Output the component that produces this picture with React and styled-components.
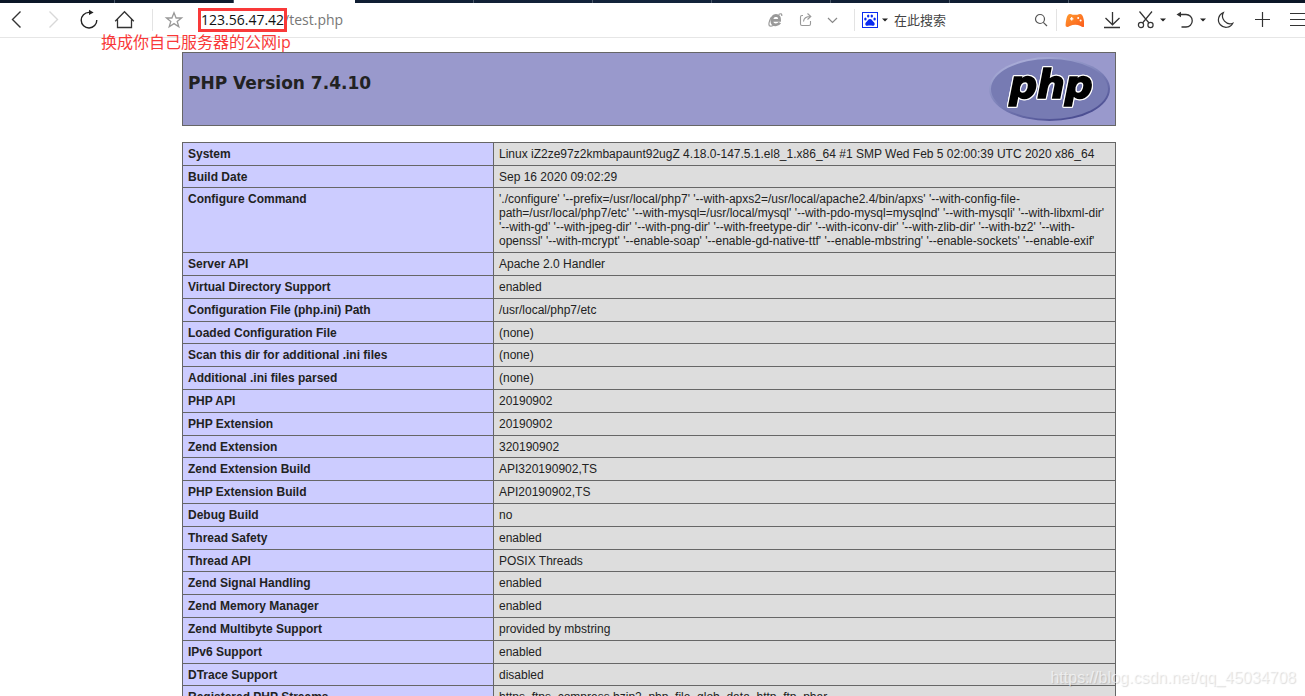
import React from 'react'
import styled, { createGlobalStyle } from 'styled-components'

const GlobalStyle = createGlobalStyle`
*{
  box-sizing: border-box;
}
body{
  margin: 0;
  background: #fff;
  color: #222;
  font-family: "Liberation Sans", Arial, "Noto Sans CJK SC", sans-serif;
}
`

const Browser = styled.div`
position: relative;
display: flex;
flex-direction: column;
height: 100vh;
overflow: hidden;
`

const TabStrip = styled.div`
display: flex;
flex: none;
height: 3px;
overflow: hidden;
background: linear-gradient(90deg, #0b1626, #13243c 50%, #0b1626);
`

const Tab = styled.span`
flex: none;
width: ${(props) => (props.$active ? '121px' : '119px')};
background: ${(props) => (props.$active ? '#fff' : 'transparent')};
border-right: 1px solid ${(props) => (props.$active ? '#fff' : '#4a5869')};
&:first-child{
  margin-left: -4px;
}
`

const Toolbar = styled.header`
display: flex;
flex: none;
align-items: center;
height: 35px;
border-bottom: 1px solid #e6e6e6;
overflow: hidden;
`

const NavGroup = styled.nav`
display: flex;
gap: 12px;
padding: 0 16px 0 4px;
`

const IconButton = styled.button`
display: flex;
flex: none;
align-items: center;
justify-content: center;
gap: 4px;
height: 24px;
padding: 0;
border: none;
background: none;
color: ${(props) => props.$color || '#333'};
svg{
  flex: none;
  fill: none;
  stroke: currentColor;
}
`

const Divider = styled.span`
flex: none;
width: 1px;
height: 22px;
background: #e3e3e3;
`

const Address = styled.form`
display: flex;
flex: 1;
align-items: center;
gap: 15px;
min-width: 0;
padding-left: 9px;
`

const AddressText = styled.div`
display: flex;
flex: 1;
min-width: 0;
font: 14px/20px "Open Sans", "Noto Sans", sans-serif;
`

const Host = styled.label`
position: relative;
color: #111;
`

const Mark = styled.span`
position: absolute;
top: -2px;
right: -3px;
bottom: -2px;
left: -3px;
border: 3px solid #f93939;
`

const PathInput = styled.input`
flex: 1;
min-width: 0;
padding: 0;
border: none;
outline: none;
background: none;
color: #777;
font: inherit;
`

const PageActions = styled.div`
display: flex;
gap: 4px;
padding-right: 10px;
`

const SearchBox = styled.form`
display: flex;
flex: none;
align-items: center;
width: 201px;
padding: 0 8px 0 7px;
`

const SearchInput = styled.input`
flex: 1;
min-width: 0;
padding: 0 0 0 6px;
border: none;
outline: none;
background: none;
font: 13px/20px "Noto Sans CJK SC", sans-serif;
&::placeholder{
  color: #444;
  opacity: 1;
}
`

const Tools = styled.div`
display: flex;
flex: none;
gap: 16px;
margin-right: -3px;
padding-left: 7px;
`

const MenuButton = styled(IconButton)`
margin-right: -6px;
`

const Note = styled.p`
position: absolute;
top: 32px;
left: 101px;
margin: 0;
color: #f93939;
font: 16px/20px "Open Sans", "Noto Sans CJK SC", sans-serif;
`

const Page = styled.main`
flex: 1;
min-height: 0;
overflow: auto;
scrollbar-width: none;
padding: 14px 7px 0 0;
`

const Banner = styled.section`
display: flex;
justify-content: space-between;
align-items: flex-start;
width: 100%;
max-width: 934px;
margin: 0 auto 16px;
padding: 4px 5px;
border: 1px solid #666;
background: #9999cc;
`

const Title = styled.h1`
margin: 14px 0 0;
font: 700 17px/24px "DejaVu Sans", "Liberation Sans", sans-serif;
`

const Logo = styled.svg`
display: block;
flex: none;
width: 121px;
height: 64px;
text{
  filter: drop-shadow(1px 0 0 #fff) drop-shadow(-1px 0 0 #fff) drop-shadow(0 1px 0 #fff) drop-shadow(0 -1px 0 #fff);
}
`

const InfoTable = styled.table`
width: 100%;
max-width: 934px;
margin: 0 auto;
border-collapse: collapse;
table-layout: fixed;
font-size: 12px;
line-height: 14px;
th, td{
  padding: 4px 5px;
  border: 1px solid #666;
  text-align: left;
  vertical-align: baseline;
}
th{
  width: 311px;
  background: #ccccff;
}
td{
  background: #ddd;
  overflow-wrap: break-word;
}
tr:nth-child(5n + 2) > *{
  padding-bottom: 3px;
}
`

const Watermark = styled.span`
position: absolute;
right: 9px;
bottom: 8px;
color: rgba(255, 255, 255, 0.6);
font-size: 16px;
line-height: 20px;
text-shadow: 1px 1px 1px rgba(0, 0, 0, 0.14);
`

const infodata = [
  ['System', 'Linux iZ2ze97z2kmbapaunt92ugZ 4.18.0-147.5.1.el8_1.x86_64 #1 SMP Wed Feb 5 02:00:39 UTC 2020 x86_64'],
  ['Build Date', 'Sep 16 2020 09:02:29'],
  ['Configure Command', "'./configure' '--prefix=/usr/local/php7' '--with-apxs2=/usr/local/apache2.4/bin/apxs' '--with-config-file-path=/usr/local/php7/etc' '--with-mysql=/usr/local/mysql' '--with-pdo-mysql=mysqlnd' '--with-mysqli' '--with-libxml-dir' '--with-gd' '--with-jpeg-dir' '--with-png-dir' '--with-freetype-dir' '--with-iconv-dir' '--with-zlib-dir' '--with-bz2' '--with-openssl' '--with-mcrypt' '--enable-soap' '--enable-gd-native-ttf' '--enable-mbstring' '--enable-sockets' '--enable-exif'"],
  ['Server API', 'Apache 2.0 Handler'],
  ['Virtual Directory Support', 'enabled'],
  ['Configuration File (php.ini) Path', '/usr/local/php7/etc'],
  ['Loaded Configuration File', '(none)'],
  ['Scan this dir for additional .ini files', '(none)'],
  ['Additional .ini files parsed', '(none)'],
  ['PHP API', '20190902'],
  ['PHP Extension', '20190902'],
  ['Zend Extension', '320190902'],
  ['Zend Extension Build', 'API320190902,TS'],
  ['PHP Extension Build', 'API20190902,TS'],
  ['Debug Build', 'no'],
  ['Thread Safety', 'enabled'],
  ['Thread API', 'POSIX Threads'],
  ['Zend Signal Handling', 'enabled'],
  ['Zend Memory Manager', 'enabled'],
  ['Zend Multibyte Support', 'provided by mbstring'],
  ['IPv6 Support', 'enabled'],
  ['DTrace Support', 'disabled'],
  ['Registered PHP Streams', 'https, ftps, compress.bzip2, php, file, glob, data, http, ftp, phar'],
]

const Caret = () => (
  <svg width="6" height="4" viewBox="0 0 6 4">
    <path d="M0 0.5H6L3 3.5Z" fill="#222" stroke="none" />
  </svg>
)

const PhpLogo = () => (
  <Logo viewBox="0 0 121 64" role="img" aria-label="PHP logo">
    <defs>
      <linearGradient id="rim" x1="0.2" y1="0" x2="0.8" y2="1">
        <stop offset="0" stopColor="#b0b3dc" />
        <stop offset="0.45" stopColor="#8085bb" />
        <stop offset="1" stopColor="#43458b" />
      </linearGradient>
    </defs>
    <ellipse cx="60.5" cy="32" rx="60.5" ry="32" fill="url(#rim)" />
    <ellipse cx="60.5" cy="32" rx="58.5" ry="30" fill="#777bb3" />
    <text
      x="62"
      y="41"
      textAnchor="middle"
      fontFamily="DejaVu Sans, Liberation Sans, sans-serif"
      fontSize="39"
      fontWeight="700"
      fontStyle="italic"
      fill="#000"
      stroke="#000"
      strokeWidth="1.6"
    >
      php
    </text>
  </Logo>
)

const BrowserBar = () => {
  return (
    <Toolbar>
      <NavGroup>
        <IconButton aria-label="Back">
          <svg width="24" height="24" strokeWidth="1.4">
            <path d="M16.5 3.5L8.5 11.5L16.5 19.5" />
          </svg>
        </IconButton>
        <IconButton aria-label="Forward" $color="#d8d8d8">
          <svg width="24" height="24" strokeWidth="1.4">
            <path d="M9.5 3.5L17.5 11.5L9.5 19.5" />
          </svg>
        </IconButton>
        <IconButton aria-label="Reload" $color="#222">
          <svg width="24" height="24" strokeWidth="1.4">
            <path d="M20.8 12A7.8 7.8 0 1 1 13 4.4H14" />
            <path d="M13 1.8L17.6 4.4L13 7Z" fill="currentColor" stroke="none" />
          </svg>
        </IconButton>
        <IconButton aria-label="Home">
          <svg width="24" height="24" strokeWidth="1.3">
            <path d="M3.2 13.3L12.5 3.8L21.8 13.3M5.5 11.5V19.5H19.5V11.5" />
          </svg>
        </IconButton>
      </NavGroup>
      <Divider />
      <Address>
        <IconButton type="button" aria-label="Bookmark" $color="#999">
          <svg width="24" height="24" strokeWidth="1.3">
            <path d="M12 4.8L14.1 10H19.5L15.2 13.4L16.8 18.8L12 15.6L7.2 18.8L8.8 13.4L4.5 10H9.9Z" />
          </svg>
        </IconButton>
        <AddressText>
          <Host htmlFor="path">123.56.47.42<Mark /></Host>
          <PathInput id="path" type="text" defaultValue="/test.php" />
        </AddressText>
      </Address>
      <PageActions>
        <IconButton aria-label="Compatibility mode" $color="#999">
          <svg width="24" height="24">
            <path d="M7.6 12.4H15.6Q15.8 7.4 12 7.4Q8.2 7.6 7.8 12.2Q7.8 16.8 11.8 16.8Q14.6 16.7 15.8 14.6" strokeWidth="2.8" />
            <path d="M14.6 6.6Q18.2 4.4 17.8 8M7 9.6Q4 15.8 5.4 17.8Q6.8 18.8 9.6 17.2" strokeWidth="1.2" />
          </svg>
        </IconButton>
        <IconButton aria-label="Share" $color="#999">
          <svg width="24" height="24" strokeWidth="1.1">
            <path d="M11 7.5H10Q8.5 7.5 8.5 9V16Q8.5 17.5 10 17.5H17Q18.5 17.5 18.5 16V13" />
            <path d="M11.5 13.5Q12 8.5 18.5 8.5M15.5 5.5L18.8 8.5L15.5 11.5" />
          </svg>
        </IconButton>
        <IconButton aria-label="More" $color="#888">
          <svg width="24" height="24" strokeWidth="1.2">
            <path d="M8 10L12.5 14.5L17 10" />
          </svg>
        </IconButton>
      </PageActions>
      <Divider />
      <SearchBox>
        <IconButton type="button" aria-label="Search engine">
          <svg width="16" height="16">
            <rect x="0.5" y="0.5" width="15" height="15" fill="#fff" stroke="#0a2bf0" />
            <g fill="#0a2bf0" stroke="none">
              <ellipse cx="3.4" cy="7" rx="1.2" ry="1.5" />
              <ellipse cx="6.2" cy="4" rx="1.2" ry="1.6" />
              <ellipse cx="9.8" cy="4" rx="1.2" ry="1.6" />
              <ellipse cx="12.6" cy="7" rx="1.2" ry="1.5" />
              <path d="M8 7C9.8 7 10.2 8.8 11.6 9.9C13.6 11.5 12.6 14 10.6 13.7C8.8 13.3 7.2 13.3 5.4 13.7C3.4 14 2.4 11.5 4.4 9.9C5.8 8.8 6.2 7 8 7Z" />
            </g>
          </svg>
          <Caret />
        </IconButton>
        <SearchInput type="text" aria-label="Search" placeholder="在此搜索" />
        <IconButton aria-label="Search" $color="#555">
          <svg width="14" height="14" strokeWidth="1.2">
            <circle cx="6" cy="6" r="4.5" />
            <path d="M9.3 9.3L13 13" />
          </svg>
        </IconButton>
      </SearchBox>
      <Divider />
      <Tools>
        <IconButton aria-label="Games">
          <svg width="20" height="20">
            <defs>
              <linearGradient id="pad" x1="0" y1="0" x2="1" y2="1">
                <stop offset="0" stopColor="#ff9a2e" />
                <stop offset="1" stopColor="#fb5a1b" />
              </linearGradient>
            </defs>
            <path
              d="M6 4Q7.5 4 8.5 4.8H13.5Q14.5 4 16 4Q18.6 4 19.6 9Q21 15.4 20.4 16.6Q18.4 17.6 16.6 16Q11.2 13.6 5.8 16Q3.6 17.6 2 16.6Q1 15.4 2.4 9Q3.4 4 6 4Z"
              fill="url(#pad)"
              stroke="none"
            />
            <path d="M6 8.8H9.4M7.7 7.1V10.5" stroke="#fff" strokeWidth="1.2" />
            <g fill="#fff" stroke="none">
              <circle cx="14.2" cy="8" r="1" />
              <circle cx="16.6" cy="10.4" r="1" />
            </g>
          </svg>
        </IconButton>
        <IconButton aria-label="Downloads">
          <svg width="20" height="20" strokeWidth="1.3">
            <path d="M12.5 2V14.5M5.5 8L12.5 14.8L19.5 8M4 17.5H20" />
          </svg>
        </IconButton>
        <MenuButton aria-label="Screenshot">
          <svg width="20" height="20" strokeWidth="1.2">
            <path d="M3.5 1.5L13 13M16 1.5L6.5 13" />
            <circle cx="5" cy="15" r="2.6" />
            <circle cx="14.5" cy="15" r="2.6" />
          </svg>
          <Caret />
        </MenuButton>
        <MenuButton aria-label="Undo">
          <svg width="20" height="20" strokeWidth="1.3">
            <path d="M3 4.5H10A6 6 0 0 1 10 17H5.5" />
            <path d="M0.5 4.5L5 1.8V7.2Z" fill="currentColor" stroke="none" />
          </svg>
          <Caret />
        </MenuButton>
        <IconButton aria-label="Night mode">
          <svg width="20" height="20" strokeWidth="1.2">
            <path d="M7.4 2.6A7.6 7.6 0 1 0 16.8 13.2A7.6 7.6 0 0 1 7.4 2.6Z" />
          </svg>
        </IconButton>
        <IconButton aria-label="Add">
          <svg width="20" height="20" strokeWidth="1.2">
            <path d="M10.5 2V17M3 9.5H18" />
          </svg>
        </IconButton>
        <IconButton aria-label="Menu">
          <svg width="20" height="20" strokeWidth="1.2">
            <path d="M2 3.5H20M2 9.5H20M2 15.5H20" />
          </svg>
        </IconButton>
      </Tools>
    </Toolbar>
  )
}

export const PhpInfo = () => {
  return (
    <Page>
      <Banner>
        <Title>PHP Version 7.4.10</Title>
        <PhpLogo />
      </Banner>
      <InfoTable>
        <tbody>
          {infodata.map(([name, value]) => (
            <tr key={name}>
              <th scope="row">{name}</th>
              <td>{value}</td>
            </tr>
          ))}
        </tbody>
      </InfoTable>
    </Page>
  )
}

export default function App() {
  return (
    <>
      <GlobalStyle />
      <Browser>
        <TabStrip>
          <Tab />
          <Tab />
          <Tab $active />
          <Tab />
          <Tab />
          <Tab />
          <Tab />
          <Tab />
          <Tab />
        </TabStrip>
        <BrowserBar />
        <PhpInfo />
        <Note>换成你自己服务器的公网ip</Note>
        <Watermark>https://blog.csdn.net/qq_45034708</Watermark>
      </Browser>
    </>
  )
}
